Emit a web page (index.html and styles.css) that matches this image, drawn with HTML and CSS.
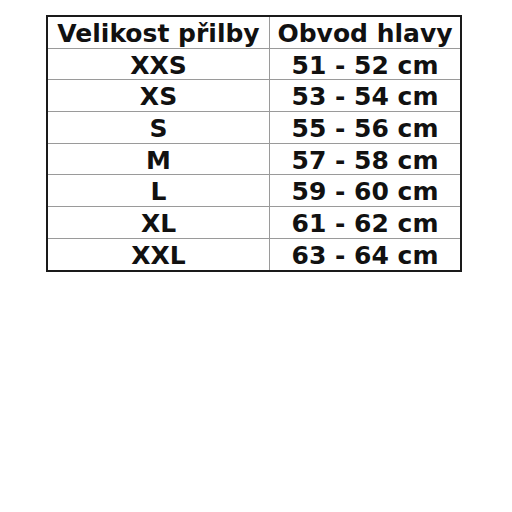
FILE: index.html
```html
<!DOCTYPE html>
<html>
<head>
<meta charset="utf-8">
<link rel="stylesheet" href="styles.css">
</head>
<body>
<table class="sizes">
  <tr><td class="c1">Velikost přilby</td><td class="c2">Obvod hlavy</td></tr>
  <tr><td>XXS</td><td>51 - 52 cm</td></tr>
  <tr><td>XS</td><td>53 - 54 cm</td></tr>
  <tr><td>S</td><td>55 - 56 cm</td></tr>
  <tr><td>M</td><td>57 - 58 cm</td></tr>
  <tr><td>L</td><td>59 - 60 cm</td></tr>
  <tr><td>XL</td><td>61 - 62 cm</td></tr>
  <tr><td>XXL</td><td>63 - 64 cm</td></tr>
</table>
</body>
</html>
```
FILE: styles.css
```css
html, body {
  margin: 0;
  padding: 0;
  background: #fff;
}
body {
  padding: 15px 0 0 46px;
  font-family: "DejaVu Sans", Verdana, sans-serif;
}
.sizes {
  border-collapse: collapse;
  border: 2px solid #1a1a1a;
  width: 416px;
}
.sizes td {
  border: 1px solid #9a9a9a;
  padding: 3px 0 0;
  height: 27.7px;
  text-align: center;
  vertical-align: top;
  font-weight: bold;
  font-size: 25px;
  line-height: 27px;
  color: #111;
  white-space: nowrap;
}
.sizes td.c1 {
  width: 221px;
}
```
